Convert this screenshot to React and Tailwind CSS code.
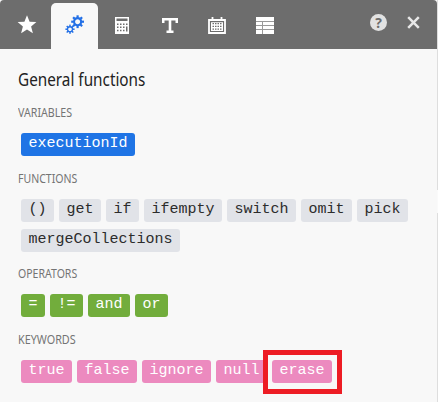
const GROUPS = [
  { title: 'VARIABLES', width: 'scale-x-[0.82]', gap: 'mb-3', tone: 'bg-[#1f74e5] text-white', rows: [['executionId']] },
  {
    title: 'FUNCTIONS',
    width: 'scale-x-[0.81]',
    gap: 'mb-[11px]',
    tone: 'bg-[#e1e3e8] text-[#2c2c2c]',
    rows: [['()', 'get', 'if', 'ifempty', 'switch', 'omit', 'pick'], ['mergeCollections']],
  },
  { title: 'OPERATORS', width: 'scale-x-[0.81]', gap: 'mb-3', tone: 'bg-[#72ad3c] text-white', rows: [['=', '!=', 'and', 'or']] },
  {
    title: 'KEYWORDS',
    width: 'scale-x-[0.83]',
    gap: '',
    tone: 'bg-[#ec8abf] text-white',
    rows: [['true', 'false', 'ignore', 'null', 'erase']],
  },
];

function Chip({ label, tone }) {
  const chip = (
    <span
      className={`block h-[23px] rounded-[3px] px-[7.5px] font-['Liberation_Mono',monospace] text-[15px] leading-[21px] whitespace-pre ${tone}`}
    >
      {label}
    </span>
  );
  if (label !== 'erase') return chip;
  return (
    <div className="relative">
      {chip}
      <div className="absolute -top-[10px] -left-[9px] h-[44px] w-[79px] border-[5px] border-[#ed1c24]" />
    </div>
  );
}

function Group({ title, width, gap, tone, rows }) {
  return (
    <section className={gap}>
      <h3
        className={`h-[31px] w-max origin-left text-[13px] leading-[20px] text-[#747474] ${width}`}
      >
        {title}
      </h3>
      <div className="ml-[3px] flex flex-col gap-[7px]">
        {rows.map((row) => (
          <div key={row[0]} className="flex gap-[5px]">
            {row.map((label) => (
              <Chip key={label} label={label} tone={tone} />
            ))}
          </div>
        ))}
      </div>
    </section>
  );
}

function Gear({ cx, cy, r, hole, tooth, len }) {
  return (
    <g transform={`translate(${cx} ${cy})`}>
      <circle r={(r + hole) / 2} fill="none" stroke="#2370e6" strokeWidth={r - hole} />
      {[0, 45, 90, 135, 180, 225, 270, 315].map((a) => (
        <rect key={a} x={-tooth / 2} y={-len} width={tooth} height={len - r + 0.6} fill="#2370e6" transform={`rotate(${a})`} />
      ))}
    </g>
  );
}

function Tab({ active, children }) {
  return (
    <div
      className={`flex h-[46px] w-[47px] shrink-0 items-center justify-center rounded-t-[5px] ${active ? 'bg-[#f8f8f8]' : ''}`}
    >
      {children}
    </div>
  );
}

function Toolbar() {
  return (
    <header className="flex h-[49px] w-[437px] items-end rounded-t-[4px] bg-[#6d6d6d] pl-1">
      <Tab>
        <svg width="20" height="20" viewBox="0 0 20 20" className="mr-px mb-[2px]">
          <path d="M10 .3l2.6 6.4 6.8.4-5.3 4.4 1.8 6.8L10 14.6l-5.9 3.7L5.9 11.5.6 7.1l6.8-.4z" fill="#fff" />
        </svg>
      </Tab>
      <Tab active>
        <svg width="20" height="20" viewBox="0 0 20 20" className="ml-px mb-[3px]">
          <Gear cx={12.6} cy={6.7} r={4.6} hole={2.5} tooth={2.2} len={6.4} />
          <Gear cx={5} cy={14.2} r={3.1} hole={1.8} tooth={1.5} len={4.6} />
        </svg>
      </Tab>
      <Tab>
        <svg width="14" height="17" viewBox="0 0 14 17" className="mb-px">
          <path d="M0 0h14v17H0z" fill="#fff" />
          <path
            d="M1.5 1.5h11V4h-11zM2 6.5h1.5v1.5H2zM5 6.5h1.5v1.5H5zM8 6.5h1.5v1.5H8zM11 6.5h1.5v1.5H11zM2 9.5h1.5v1.5H2zM5 9.5h1.5v1.5H5zM8 9.5h1.5v1.5H8zM11 9.5h1.5V14.5H11zM2 12.8h1.5v1.5H2zM5 12.8h1.5v1.5H5zM8 12.8h1.5v1.5H8z"
            fill="#6d6d6d"
          />
        </svg>
      </Tab>
      <Tab>
        <svg width="16" height="15" viewBox="0 0 16 15" className="mb-px ml-[3px]">
          <path d="M1.2 5V1.3h13.6V5M8 1v12.5M4.5 13.8h7" fill="none" stroke="#fff" strokeWidth="2.6" />
        </svg>
      </Tab>
      <Tab>
        <svg width="18" height="17" viewBox="0 0 18 17" className="mb-px ml-[2px]">
          <path d="M1 3h16v13H1zM4.5 0v4M13.5 0v4" fill="none" stroke="#fff" strokeWidth="1.8" />
          <path d="M3 5h12v9H3z" fill="#fff" />
          <path
            d="M4.5 6h1.5v1.3H4.5zM7 6h1.5v1.3H7zM9.5 6H11v1.3H9.5zM12 6h1.5v1.3H12zM4.5 8.7h1.5v1.3H4.5zM7 8.7h1.5v1.3H7zM9.5 8.7H11v1.3H9.5zM12 8.7h1.5v1.3H12zM4.5 11.4h1.5v1.3H4.5zM7 11.4h1.5v1.3H7zM9.5 11.4H11v1.3H9.5zM12 11.4h1.5v1.3H12zM2 4.6h14v.6H2zM2 5v9.5h.8V5zM15.2 5v9.5h.8V5zM2 13.9h14v.6H2z"
            fill="#6d6d6d"
          />
        </svg>
      </Tab>
      <Tab>
        <svg width="18" height="17" viewBox="0 0 18 17" className="mb-px ml-[4px]">
          <path d="M0 0h18v17H0z" fill="#fff" />
          <path d="M0 4.5h18M0 8.5h18M0 12.5h18M6.5 4.5V17" fill="none" stroke="#999" />
        </svg>
      </Tab>
      <div className="mr-[17px] mb-[18px] ml-auto flex items-center gap-[20px]">
        <span className="flex size-[17px] items-center justify-center rounded-full bg-[#e2e2e2] font-['Open_Sans',sans-serif] text-[14px] leading-none font-bold text-[#6d6d6d]">
          ?
        </span>
        <svg width="13" height="13" viewBox="0 0 13 13">
          <path d="M1.2 1.2l10.6 10.6M11.8 1.2L1.2 11.8" stroke="#e8e8e8" strokeWidth="2.5" />
        </svg>
      </div>
    </header>
  );
}

export default function App() {
  return (
    <div className="flex h-[402px] w-[438px] overflow-hidden bg-[#f8f8f8] font-['Noto_Sans',sans-serif]">
      <div className="w-[437px] shrink-0">
        <Toolbar />
        <main className="pl-[18px]">
          <h2 className="h-[53px] w-max origin-left scale-x-[0.85] pt-[17px] text-[18px] leading-[26px] text-[#222]">
            General functions
          </h2>
          {GROUPS.map((group) => (
            <Group key={group.title} {...group} />
          ))}
        </main>
      </div>
      <div className="flex w-px flex-col">
        <div className="h-[190px] bg-[#dedede]" />
        <div className="h-[23px] bg-[#fafafa]" />
        <div className="flex-1 bg-[#dedede]" />
      </div>
    </div>
  );
}
